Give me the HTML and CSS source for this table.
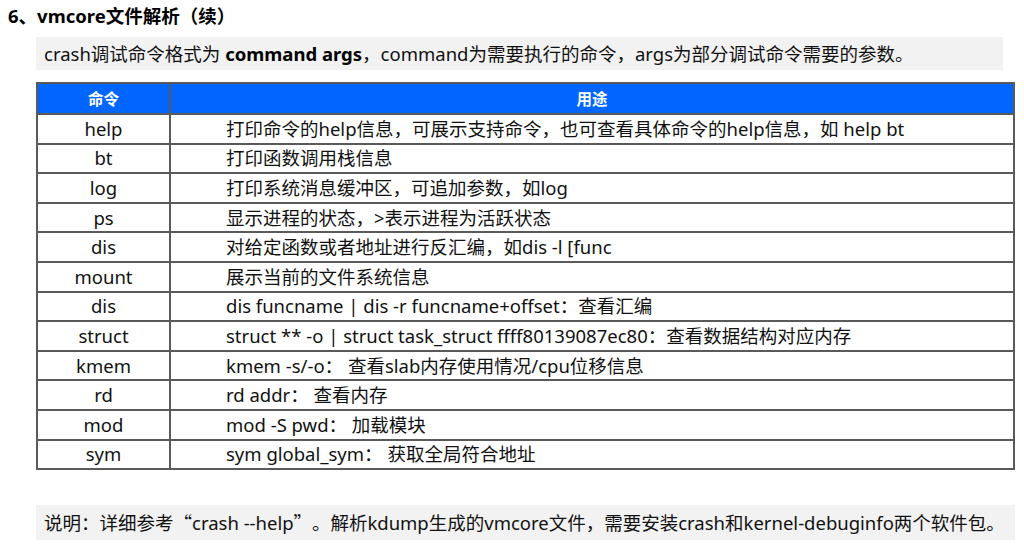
FILE: index.html
```html
<!DOCTYPE html>
<html lang="zh-CN">
<head>
<meta charset="utf-8">
<title>vmcore文件解析（续）</title>
<link rel="stylesheet" href="styles.css">
</head>
<body>
<div class="page">
  <h1 class="title">6、vmcore文件解析（续）</h1>
  <p class="lead">crash调试命令格式为 <b>command args</b>，command为需要执行的命令，args为部分调试命令需要的参数。</p>
  <table class="cmds">
    <thead>
      <tr><th class="c1">命令</th><th class="c2">用途</th></tr>
    </thead>
    <tbody>
      <tr><td class="c1">help</td><td class="c2">打印命令的help信息，可展示支持命令，也可查看具体命令的help信息，如 help bt</td></tr>
      <tr><td class="c1">bt</td><td class="c2">打印函数调用栈信息</td></tr>
      <tr><td class="c1">log</td><td class="c2">打印系统消息缓冲区，可追加参数，如log</td></tr>
      <tr><td class="c1">ps</td><td class="c2">显示进程的状态，&gt;表示进程为活跃状态</td></tr>
      <tr><td class="c1">dis</td><td class="c2">对给定函数或者地址进行反汇编，如dis -l [func</td></tr>
      <tr><td class="c1">mount</td><td class="c2">展示当前的文件系统信息</td></tr>
      <tr><td class="c1">dis</td><td class="c2">dis funcname | dis -r funcname+offset：查看汇编</td></tr>
      <tr><td class="c1">struct</td><td class="c2">struct ** -o | struct task_struct ffff80139087ec80：查看数据结构对应内存</td></tr>
      <tr><td class="c1">kmem</td><td class="c2">kmem -s/-o： 查看slab内存使用情况/cpu位移信息</td></tr>
      <tr><td class="c1">rd</td><td class="c2">rd addr： 查看内存</td></tr>
      <tr><td class="c1">mod</td><td class="c2">mod -S pwd： 加载模块</td></tr>
      <tr><td class="c1">sym</td><td class="c2">sym global_sym： 获取全局符合地址</td></tr>
    </tbody>
  </table>
  <p class="note">说明：详细参考<span class="cjkq">“</span>crash --help<span class="cjkq close">”</span>。解析kdump生成的vmcore文件，需要安装crash和kernel-debuginfo两个软件包。</p>
</div>
</body>
</html>
```

FILE: styles.css
```css
html, body {
  margin: 0;
  padding: 0;
  background: #ffffff;
}
body {
  font-family: "Noto Sans", "Noto Sans CJK SC", sans-serif;
  color: #111111;
  width: 1024px;
  height: 544px;
  overflow: hidden;
}
.page {
  display: flex;
  flex-direction: column;
  align-items: flex-start;
}
.title {
  margin: 0;
  padding: 2px 0 0 8px;
  font-size: 18.5px;
  font-weight: 700;
  line-height: 28px;
  color: #000;
}
.lead {
  margin: 7px 0 0 36px;
  width: 967px;
  height: 33px;
  box-sizing: border-box;
  padding-left: 8px;
  background: #f2f2f2;
  font-size: 18.5px;
  line-height: 33px;
  white-space: nowrap;
}
.lead b {
  font-weight: 700;
  color: #000;
}
.cmds {
  margin: 12px 0 0 36px;
  width: 979px;
  border-collapse: collapse;
  border: 2px solid #5a5a5a;
  font-size: 18.5px;
}
.cmds th, .cmds td {
  border: 2px solid #5a5a5a;
  padding: 0;
  white-space: nowrap;
}
.cmds th {
  background: #0066ff;
  color: #fff;
  font-weight: 700;
  font-size: 15.5px;
  height: 29px;
  line-height: 20px;
  text-align: center;
}
.cmds td {
  height: 27.6px;
  line-height: 20px;
}
.cmds .c1 {
  width: 131px;
  text-align: center;
}
.cmds td.c2 {
  padding-left: 55px;
  text-align: left;
}
.note {
  margin: 35px 0 0 36px;
  width: 979px;
  height: 35px;
  box-sizing: border-box;
  padding-left: 8px;
  background: #f2f2f2;
  font-size: 18.5px;
  line-height: 35px;
  white-space: nowrap;
}
.cjkq {
  font-family: "Noto Sans CJK SC", sans-serif;
}
.cjkq.close {
  margin-right: 9px;
}
```
